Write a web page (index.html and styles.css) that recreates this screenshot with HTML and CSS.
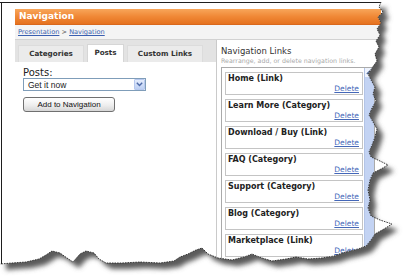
FILE: index.html
```html
<!DOCTYPE html>
<html>
<head>
<meta charset="utf-8">
<link rel="stylesheet" href="styles.css">
</head>
<body>
<div class="page">
  <svg class="shadow" width="406" height="276" viewBox="0 0 406 276">
    <defs><filter id="blur" x="-10%" y="-10%" width="120%" height="120%"><feGaussianBlur stdDeviation="2.6"/></filter></defs>
    <polygon transform="translate(6,6)" filter="url(#blur)" fill="#5a5a5a" points="0,2 381,2 379,7 383,12 378,17 381,23 377,29 380,35 376,41 379,47 375,54 377,61 372,68 368,74 371,80 375,87 373,94 376,101 372,108 369,115 373,122 377,129 375,137 372,145 369,152 371,157 380,161 388,165 381,169 373,173 370,180 368,190 370,200 368,208 371,216 380,220 392,224 384,229 375,234 371,240 366,246 358,249 350,251 342,253 334,256 322,258 308,259 296,257 286,259 272,261 262,258 252,254 244,257 232,260 218,258 208,254 202,248 196,250 188,254 180,257 174,261 160,263 140,262 122,263 106,263 99,259 94,253 86,251 80,254 73,262 67,258 60,253 52,251 46,255 39,259 26,262 12,263 0,264"/>
  </svg>
  <div class="sheet">
    <div class="window">
      <div class="titlebar">Navigation</div>
      <div class="crumbs"><a class="crumb">Presentation</a> &gt; <a class="crumb">Navigation</a></div>
      <div class="body">
        <div class="left">
          <div class="tabs">
            <span class="tab tab-cat">Categories</span>
            <span class="tab tab-posts active">Posts</span>
            <span class="tab tab-custom">Custom Links</span>
          </div>
          <div class="pane">
            <div class="label">Posts:</div>
            <div class="select">
              <span class="select-text">Get it now</span>
              <span class="drop"><svg width="7" height="5" viewBox="0 0 7 5"><path d="M0.8 0.8 L3.5 3.6 L6.2 0.8" fill="none" stroke="#4d6aa8" stroke-width="1.4"/></svg></span>
            </div>
            <button class="btn">Add to Navigation</button>
          </div>
        </div>
        <div class="right">
          <div class="rtitle">Navigation Links</div>
          <div class="rsub">Rearrange, add, or delete navigation links.</div>
          <div class="listbox">
            <div class="items">
              <div class="item"><div class="iname">Home (Link)</div><a class="del">Delete</a></div>
              <div class="item"><div class="iname">Learn More (Category)</div><a class="del">Delete</a></div>
              <div class="item"><div class="iname">Download / Buy (Link)</div><a class="del">Delete</a></div>
              <div class="item"><div class="iname">FAQ (Category)</div><a class="del">Delete</a></div>
              <div class="item"><div class="iname">Support (Category)</div><a class="del">Delete</a></div>
              <div class="item"><div class="iname">Blog (Category)</div><a class="del">Delete</a></div>
              <div class="item"><div class="iname">Marketplace (Link)</div><a class="del">Delete</a></div>
            </div>
            <div class="scroll">
              <div class="sarrow"><svg width="7" height="5" viewBox="0 0 7 5"><path d="M0.8 4 L3.5 1.2 L6.2 4" fill="none" stroke="#56709e" stroke-width="1.3"/></svg></div>
              <div class="sthumb"></div>
            </div>
          </div>
        </div>
      </div>
    </div>
  </div>
  <svg class="outline" width="406" height="276" viewBox="0 0 406 276">
    <path d="M0 2.5 H381 M1.5 2 V264" stroke="#1e1e1e" stroke-width="1" fill="none"/>
    <polyline fill="none" stroke="#2a2a2a" stroke-width="0.9" stroke-dasharray="1.6 1" points="381,2 379,7 383,12 378,17 381,23 377,29 380,35 376,41 379,47 375,54 377,61 372,68 368,74 371,80 375,87 373,94 376,101 372,108 369,115 373,122 377,129 375,137 372,145 369,152 371,157 380,161 388,165 381,169 373,173 370,180 368,190 370,200 368,208 371,216 380,220 392,224 384,229 375,234 371,240 366,246 358,249 350,251 342,253 334,256 322,258 308,259 296,257 286,259 272,261 262,258 252,254 244,257 232,260 218,258 208,254 202,248 196,250 188,254 180,257 174,261 160,263 140,262 122,263 106,263 99,259 94,253 86,251 80,254 73,262 67,258 60,253 52,251 46,255 39,259 26,262 12,263 0,264"/>
  </svg>
</div>
</body>
</html>
```

FILE: styles.css
```css
* { box-sizing: border-box; margin: 0; padding: 0; }
html, body { margin: 0; background: #fff; }
body { font-family: "DejaVu Sans", Verdana, sans-serif; color: #222; }

.page { position: relative; width: 406px; height: 276px; overflow: hidden; background: #fff; }
.shadow, .outline { position: absolute; left: 0; top: 0; }
.shadow { z-index: 0; }
.outline { z-index: 2; pointer-events: none; }

.sheet {
  position: relative; z-index: 1;
  width: 406px; height: 276px;
  background: #fff;
  padding: 9px 0 0 15px;
  overflow: hidden;
  clip-path: polygon(0px 2px, 381px 2px, 379px 7px, 383px 12px, 378px 17px, 381px 23px, 377px 29px, 380px 35px, 376px 41px, 379px 47px, 375px 54px, 377px 61px, 372px 68px, 368px 74px, 371px 80px, 375px 87px, 373px 94px, 376px 101px, 372px 108px, 369px 115px, 373px 122px, 377px 129px, 375px 137px, 372px 145px, 369px 152px, 371px 157px, 380px 161px, 388px 165px, 381px 169px, 373px 173px, 370px 180px, 368px 190px, 370px 200px, 368px 208px, 371px 216px, 380px 220px, 392px 224px, 384px 229px, 375px 234px, 371px 240px, 366px 246px, 358px 249px, 350px 251px, 342px 253px, 334px 256px, 322px 258px, 308px 259px, 296px 257px, 286px 259px, 272px 261px, 262px 258px, 252px 254px, 244px 257px, 232px 260px, 218px 258px, 208px 254px, 202px 248px, 196px 250px, 188px 254px, 180px 257px, 174px 261px, 160px 263px, 140px 262px, 122px 263px, 106px 263px, 99px 259px, 94px 253px, 86px 251px, 80px 254px, 73px 262px, 67px 258px, 60px 253px, 52px 251px, 46px 255px, 39px 259px, 26px 262px, 12px 263px, 0px 264px);
}

.window { width: 366px; }

.titlebar {
  height: 16px;
  background: linear-gradient(#f8a65a, #f08836 50%, #e5721f);
  border-bottom: 1px solid #d9681c;
  color: #fff; font-weight: bold; font-size: 9px; line-height: 15px;
  padding-left: 4px;
}

.crumbs {
  height: 15px;
  background: #f4f4f4;
  border-bottom: 1px solid #d2d2d2;
  font-size: 6.6px; line-height: 14px;
  padding-left: 3px; color: #555;
}
.crumb { color: #3a5fb0; text-decoration: underline; }

.body { display: flex; height: 240px; }

.left { width: 201px; flex: none; }
.tabs {
  height: 22px;
  background: #e3e3e3;
  display: flex; align-items: flex-end; gap: 3px;
  padding-left: 3px;
}
.tab {
  height: 17px;
  background: #ebebeb;
  border: 1px solid #dcdcdc; border-bottom: none;
  font-size: 7.2px; font-weight: bold; line-height: 16px;
  color: #333; text-align: center;
}
.tab-cat { width: 66px; }
.tab-posts { width: 37px; }
.tab-custom { width: 76px; }
.tab.active { height: 18px; background: #fff; border-color: #d6d6d6; }

.pane { padding: 5px 0 0 8px; }
.label { font-size: 10px; line-height: 11px; color: #222; }
.select {
  width: 123px; height: 13px;
  border: 1px solid #7f9db9;
  display: flex; align-items: center; justify-content: space-between;
  font-family: "Liberation Sans", Arial, sans-serif; font-size: 8.5px;
  padding-left: 4px; background: #fff;
}
.drop {
  width: 11px; height: 11px;
  background: linear-gradient(#e4ecfc, #bccff3);
  border: 1px solid #b7c9ef; border-radius: 1px;
  display: flex; align-items: center; justify-content: center;
}
.btn {
  display: block; margin-top: 6px;
  width: 92px; height: 15px;
  border: 1px solid #707070; border-radius: 3px;
  background: linear-gradient(#ffffff, #eeeeee 55%, #d6d6d6);
  font-family: "Liberation Sans", Arial, sans-serif; font-size: 8px; color: #111;
  line-height: 12px;
}

.right {
  flex: 1;
  border-left: 1px solid #cacaca;
  padding: 5px 4px 0 4px;
}
.rtitle { font-size: 8.5px; line-height: 12px; color: #333; }
.rsub { font-size: 6.3px; line-height: 7px; color: #a9a9a9; white-space: nowrap; }
.listbox {
  margin-top: 3px;
  width: 154px; height: 200px;
  border: 1px solid #aaaaaa;
  display: flex;
}
.items {
  width: 142px; flex: none;
  padding: 4px 1px 0 3px;
  display: flex; flex-direction: column; gap: 4px;
}
.item {
  height: 23px; flex: none;
  border: 1px solid #c4c4c4;
  padding: 1px 3px 0 2px;
  background: #fff;
}
.iname { font-size: 8px; font-weight: bold; line-height: 10px; color: #222; white-space: nowrap; }
.del {
  display: block; text-align: right;
  font-size: 7.5px; line-height: 9px;
  color: #4467b8; text-decoration: underline;
}
.scroll {
  width: 10px; flex: none;
  background: #c3d3f3;
  border-left: 1px solid #b3c4e6;
  display: flex; flex-direction: column;
}
.sarrow {
  height: 9px; background: #eef3fd;
  display: flex; align-items: center; justify-content: center;
}
.sthumb { flex: 1; background: #c3d3f3; }
```
